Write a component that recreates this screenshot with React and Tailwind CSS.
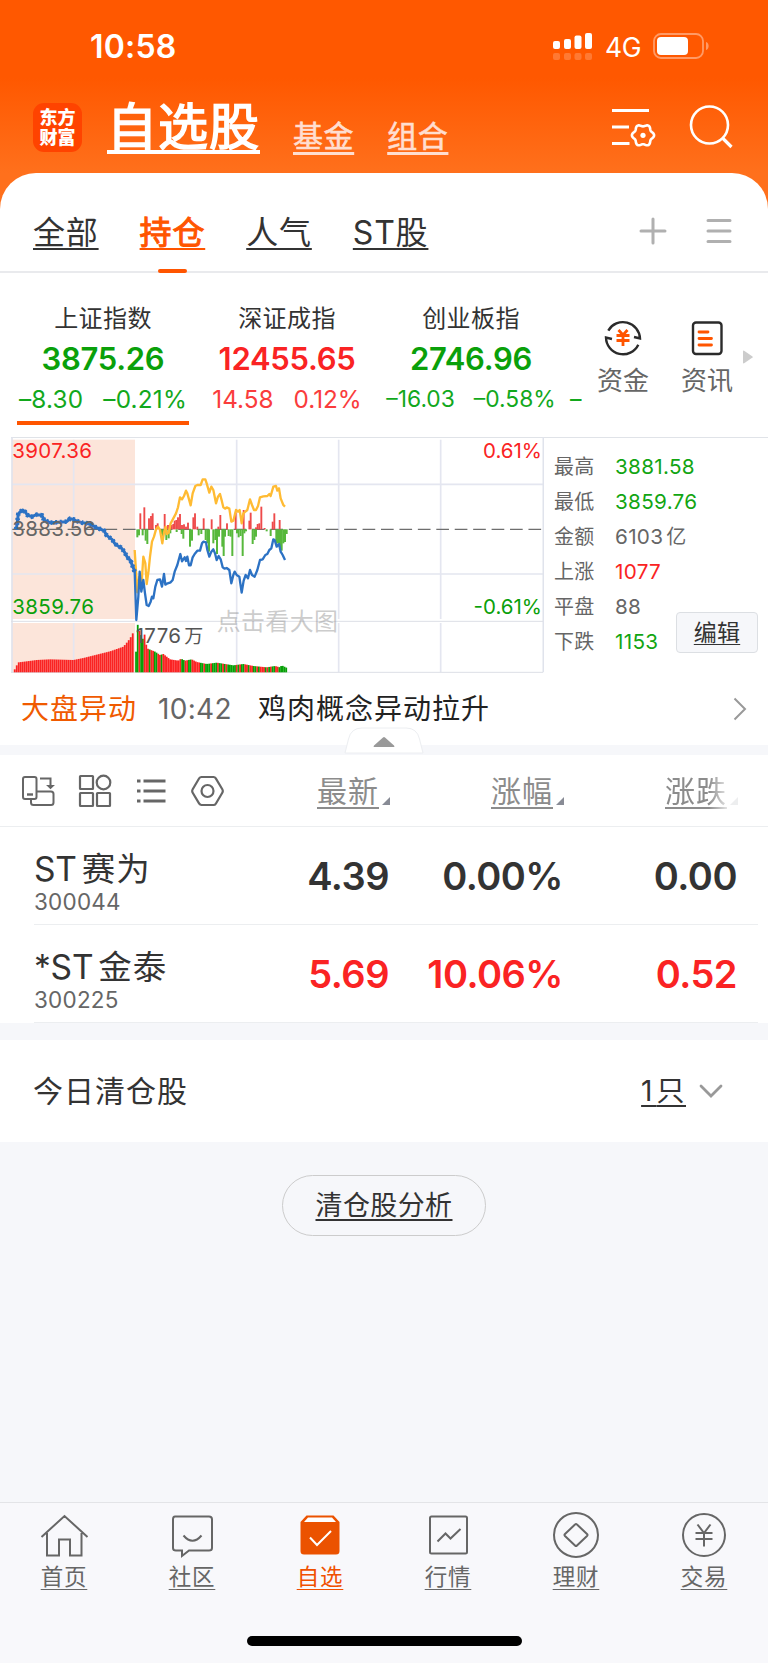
import React from 'react';
import clsx from 'clsx';

const indices = [
  { name: '上证指数', price: '3875.26', diff: '–8.30', pct: '–0.21%', up: false, active: true },
  { name: '深证成指', price: '12455.65', diff: '14.58', pct: '0.12%', up: true },
  { name: '创业板指', price: '2746.96', diff: '–16.03', pct: '–0.58%', up: false, compact: true },
];

const stats = [
  { label: '最高', value: '3881.58', color: 'text-[#12a512]' },
  { label: '最低', value: '3859.76', color: 'text-[#12a512]' },
  { label: '金额', value: '6103', unit: '亿', color: 'text-[#666]' },
  { label: '上涨', value: '1077', color: 'text-[#fa2323]' },
  { label: '平盘', value: '88', color: 'text-[#666]' },
  { label: '下跌', value: '1153', color: 'text-[#12a512]' },
];

const stocks = [
  { prefix: 'ST', name: '赛为', code: '300044', price: '4.39', pct: '0.00%', diff: '0.00', color: 'text-[#333]' },
  { prefix: '*ST', name: '金泰', code: '300225', price: '5.69', pct: '10.06%', diff: '0.52', color: 'text-[#fa2323]' },
];

// Chart data, in viewBox units
const auctionLine =
  '48,298 50,290 55,252 60,246 68,240 75,245 82,255 95,260 110,254 126,256 132,270 150,278 200,275 210,266 220,268 230,273 245,278 262,280 275,285 288,292 300,297 312,302 320,316 328,322 336,328 344,340 352,347 362,352 372,364 382,382 392,392 396,404 401,416 404,426';

const priceLine =
  '404,424 409,570 415,500 419,425 424,485 430,450 435,490 440,525 446,528 452,515 456,500 460,505 466,470 472,450 480,448 486,470 492,432 496,464 503,460 512,457 518,450 524,425 532,405 536,390 541,372 546,394 554,382 558,393 562,380 567,406 572,406 578,382 584,372 592,362 600,362 606,340 610,335 618,337 622,360 628,380 634,365 640,358 645,370 650,390 656,378 662,388 668,412 674,416 680,414 688,420 694,460 700,435 704,425 710,435 718,440 725,488 731,452 737,435 744,445 750,420 756,435 764,440 772,420 780,390 788,388 796,375 802,372 808,360 814,355 820,328 824,330 830,350 837,342 842,365 848,375 855,390';

const leadLine =
  '404,360 412,487 418,440 424,472 430,380 436,400 440,462 446,420 450,380 456,335 462,320 468,298 474,290 480,300 487,340 492,308 497,290 500,312 506,308 512,280 520,265 528,250 534,232 540,202 546,208 552,198 558,182 562,190 572,226 578,190 586,168 592,165 602,165 608,148 616,148 620,160 628,188 634,170 640,180 648,220 654,200 660,192 666,215 670,232 676,236 680,232 688,236 694,275 700,272 708,240 714,245 719,240 725,280 730,250 736,245 742,240 750,208 756,225 762,240 768,240 774,228 780,202 790,199 802,198 808,192 812,198 820,170 828,168 832,182 837,175 842,205 850,225 855,230';

const redBars = [
  [421, 250], [433, 232], [447, 265], [453, 258], [458, 250], [468, 285], [473, 280], [494, 252], [504, 285],
  [510, 290], [515, 285], [520, 282], [524, 272], [529, 270], [534, 262], [540, 252], [546, 285], [552, 283],
  [558, 290], [564, 278], [580, 262], [585, 250], [592, 290], [611, 265], [635, 268], [655, 290], [661, 255],
  [681, 280], [707, 248], [731, 240], [748, 272], [752, 248], [768, 292], [773, 282], [778, 280], [784, 230],
  [794, 294], [818, 275], [823, 250], [839, 270],
];

const greenBars = [
  [412, 322], [417, 316], [428, 316], [437, 332], [442, 342], [484, 312], [489, 325], [499, 330], [506, 325],
  [511, 310], [530, 306], [545, 312], [550, 326], [570, 350], [576, 332], [596, 316], [604, 312], [617, 330],
  [622, 340], [627, 365], [640, 340], [646, 330], [651, 372], [657, 320], [667, 350], [671, 378], [675, 320],
  [686, 318], [692, 320], [697, 378], [711, 310], [716, 322], [722, 318], [728, 378], [733, 310], [738, 304],
  [758, 342], [763, 330], [768, 320], [800, 304], [812, 318], [829, 342], [834, 340], [840, 355], [845, 362],
  [850, 340], [855, 336], [860, 312],
];

const volumeEnvelope = [
  [44, 718], [50, 706], [56, 697], [80, 694], [110, 690], [150, 688], [220, 690], [250, 684], [290, 674],
  [330, 664], [370, 650], [385, 632], [393, 620], [399, 608], [403, 606], [408, 665], [412, 580], [417, 600],
  [423, 614], [428, 628], [433, 610], [438, 642], [443, 656], [465, 665], [480, 675], [490, 672], [510, 688],
  [535, 692], [543, 686], [555, 692], [575, 688], [590, 696], [620, 702], [650, 698], [700, 706], [730, 702],
  [760, 708], [800, 712], [825, 708], [840, 712], [845, 706], [859, 713],
];

const volumeColors = 'ggrggrrrgrrggrrgrrrrrrrrrrrggrrggrrrrrggrgggrgggrggrgrgggggrgrggrrgrrggrgrrrgrgrggrrgggggg';

function volumeTop(x) {
  for (let i = 1; i < volumeEnvelope.length; i++) {
    const [x0, y0] = volumeEnvelope[i - 1];
    const [x1, y1] = volumeEnvelope[i];
    if (x <= x1) return y0 + ((y1 - y0) * (x - x0)) / (x1 - x0);
  }
  return 713;
}

const auctionVolume = Array.from({ length: 60 }, (_, i) => 44 + i * 6);
const tradeVolume = Array.from({ length: 89 }, (_, i) => 408 + i * 5.12);

// Six-lobed gear outline
const gearPoints = Array.from({ length: 72 }, (_, i) => {
  const a = (i * Math.PI) / 36;
  const r = 10 + 1.1 * Math.cos(6 * a);
  return `${(31 + r * Math.cos(a)).toFixed(2)},${(29.3 + r * Math.sin(a)).toFixed(2)}`;
}).join(' ');

const StatusBar = () => (
  <div className="flex h-[92px] items-center justify-between pr-[58px] pl-[90px] text-white">
    <span className="mt-[2px] text-[32px] leading-[40px] font-semibold tracking-[0.2px]">10:58</span>
    <div className="flex items-center">
      <svg className="h-[28px] w-[40px]" viewBox="0 0 40 28" fill="#fff">
        <rect x="0" y="9" width="7" height="8" rx="2" />
        <rect x="11" y="7" width="7" height="10" rx="2" />
        <rect x="21.500" y="3.500" width="7" height="13.500" rx="2" />
        <rect x="32" y="1" width="7" height="16" rx="2" />
        <g opacity="0.2">
          <rect x="0" y="21" width="7" height="7" rx="2" />
          <rect x="11" y="21" width="7" height="7" rx="2" />
          <rect x="21.500" y="21" width="7" height="7" rx="2" />
          <rect x="32" y="21" width="7" height="7" rx="2" />
        </g>
      </svg>
      <span className="mt-[2px] ml-[12px] w-[48px] text-[26.500px] leading-[30px] tracking-[-0.300px]">4G</span>
      <svg className="h-[26px] w-[57px]" viewBox="0 0 57 26" fill="none">
        <rect x="1" y="1" width="49" height="24" rx="7" stroke="#fff" strokeOpacity="0.4" strokeWidth="1.800" />
        <rect x="4" y="4" width="31" height="18" rx="4" fill="#fff" />
        <path d="M53 9c3.500 1 3.500 7 0 8z" fill="#fff" fillOpacity="0.4" />
      </svg>
    </div>
  </div>
);

const Header = () => (
  <div className="flex h-[81px] items-start pl-[33px] text-white">
    <div className="mt-[11px] flex h-[49px] w-[49px] flex-col items-center justify-center rounded-[11px] bg-[#ff4300] text-[18px] leading-[20px] font-black">
      <span>东方</span>
      <span>财富</span>
    </div>
    <span className="ml-[25px] text-[50px] leading-[70px] tracking-[1px] underline decoration-[4px] underline-offset-[5px] [-webkit-text-stroke:1.6px_white]">自选股</span>
    <span className="mt-[19px] ml-[33px] text-[30px] leading-[50px] tracking-[0.600px] text-[#ffded0] underline decoration-[2.500px] underline-offset-[5px] [-webkit-text-stroke:0.6px_#ffded0]">基金</span>
    <span className="mt-[19px] ml-[33px] text-[30px] leading-[50px] tracking-[0.600px] text-[#ffded0] underline decoration-[2.500px] underline-offset-[5px] [-webkit-text-stroke:0.6px_#ffded0]">组合</span>
    <svg className="mt-[14px] ml-[164px] h-[42px] w-[44px]" viewBox="0 0 44 42" fill="none" stroke="#fff" strokeWidth="3">
      <path d="M0 4.500h37M0 21h17M0 37.500h17.500" />
      <polygon points={gearPoints} strokeWidth="2.600" strokeLinejoin="round" />
      <circle cx="31" cy="29.300" r="2.600" fill="#fff" stroke="none" />
    </svg>
    <svg className="mt-[12px] ml-[33px] h-[46px] w-[46px]" viewBox="0 0 46 46" fill="none" stroke="#fff" strokeWidth="2.600">
      <circle cx="20.500" cy="21" r="18.500" />
      <path d="M34 34.500L42.500 43" strokeWidth="3.200" />
    </svg>
  </div>
);

const Tabs = () => (
  <div className="flex h-[100px] items-start border-b-2 border-[#e9eaed] pl-[33px] text-[32px] leading-[48px] tracking-[0.800px] text-[#333]">
    <span className="mt-[36px] underline decoration-2 underline-offset-[4px]">全部</span>
    <div className="mt-[36px] ml-[41px] flex flex-col items-center text-[#ff5500]">
      <span className="underline decoration-2 underline-offset-[4px] [-webkit-text-stroke:1px_#ff5500]">持仓</span>
      <div className="mt-[12px] h-[4px] w-[29px] rounded-full bg-[#ff5500]" />
    </div>
    <span className="mt-[36px] ml-[41px] underline decoration-2 underline-offset-[4px]">人气</span>
    <span className="mt-[36px] ml-[41px] underline decoration-2 underline-offset-[4px]">ST股</span>
    <svg className="mt-[44px] ml-auto h-[28px] w-[28px]" viewBox="0 0 28 28" stroke="#b0b0b0" strokeWidth="3" strokeLinecap="round">
      <path d="M14 2v24M2 14h24" />
    </svg>
    <svg className="mt-[44px] mr-[35px] ml-[38px] h-[28px] w-[28px]" viewBox="0 0 28 28" stroke="#b0b0b0" strokeWidth="3" strokeLinecap="round">
      <path d="M3 3.500h22M3 14h22M3 24.500h22" />
    </svg>
  </div>
);

const IndexStrip = () => (
  <div className="flex h-[164px] pl-[11px]">
    <div className="flex w-[571px] shrink-0 overflow-hidden">
      {indices.map((item) => (
        <div key={item.name} className="flex w-[184px] shrink-0 flex-col items-center pt-[28px]">
          <span className="text-[24px] leading-[36px] tracking-[0.400px] text-[#333]">{item.name}</span>
          <span className={clsx('text-[31px] leading-[44px] font-semibold tracking-[-0.300px]', item.up ? 'text-[#fa2323]' : 'text-[#0aa00a]')}>
            {item.price}
          </span>
          <div
            className={clsx(
              'flex leading-[36px] whitespace-nowrap',
              item.compact ? 'gap-[19px] text-[22.800px]' : 'gap-[20px] text-[24.300px]',
              item.active && 'tracking-[0.200px]',
              item.up ? 'text-[#fa3c3c]' : 'text-[#12a81c]'
            )}
          >
            <span>{item.diff}</span>
            <span>{item.pct}</span>
          </div>
          {item.active && <div className="mt-[4px] h-[4px] w-[172px] bg-[#ff5500]" />}
        </div>
      ))}
      <span className="ml-[7px] pt-[108px] text-[23px] leading-[36px] whitespace-nowrap text-[#12a81c]">–</span>
    </div>
    <div className="ml-[14px] flex w-[54px] flex-col items-center text-[26px] leading-[36px] text-[#666]">
      <svg className="mt-[46px] h-[38px] w-[38px]" viewBox="0 0 38 38" fill="none" stroke="#2b2b2b" strokeWidth="2.400">
        <path d="M4.300 11.600A17 17 0 0 1 36 19.500L30 18" />
        <path d="M34.300 25.700A17 17 0 0 1 2 18.500L8 20" />
        <path d="M14.500 11l4.500 5 4.500-5M12.500 16.500h13M12.500 21.500h13M19 16v11" stroke="#ff5500" strokeWidth="2.800" />
      </svg>
      <span className="mt-[6px] whitespace-nowrap">资金</span>
    </div>
    <div className="ml-[30px] flex w-[54px] flex-col items-center text-[26px] leading-[36px] text-[#666]">
      <svg className="mt-[46px] h-[38px] w-[38px]" viewBox="0 0 38 38" fill="none" strokeWidth="2.400">
        <rect x="5" y="3.500" width="28.500" height="31.500" rx="3" stroke="#2b2b2b" />
        <path d="M11 13h9M11 19.500h12.500M11 26h12.500" stroke="#ff5500" strokeWidth="2.800" strokeLinecap="round" />
      </svg>
      <span className="mt-[6px] whitespace-nowrap">资讯</span>
    </div>
    <svg className="mt-[77px] ml-[8px] h-[14px] w-[12px]" viewBox="0 0 12 14" fill="#ccc">
      <path d="M1 1.500Q1 0 2.500 1L10.500 6.500Q11 7 10.500 7.500L2.500 13Q1 14 1 12.500z" />
    </svg>
  </div>
);

const Chart = () => (
  <svg className="-mt-px h-[237px] w-[533px] shrink-0" viewBox="33 21 1599 711" fill="none">
    <rect x="36" y="29" width="369" height="538" fill="#fce5da" />
    <rect x="36" y="579" width="369" height="148" fill="#fce5da" />
    <g stroke="#e4e6f0" strokeWidth="5">
      <path d="M221 29V567M221 579V727M710 29V567M710 579V727M1016 29V567M1016 579V727M1322 29V567M1322 579V727" />
      <path d="M36 163H1629M36 432H1629" />
      <path d="M36 21V727M1630 21V727" stroke="#e0e3ec" />
      <path d="M33 574H1629M33 727H1629" strokeWidth="3" stroke="#dcdfe6" />
    </g>
    <path d="M37 298H1624" stroke="#6e6e6e" strokeWidth="4" strokeDasharray="38 17.300" />
    {redBars.map(([x, y]) => (
      <rect key={x} x={x - 2.8} y={y} width="5.600" height={298 - y} fill="#ee4a4a" />
    ))}
    {greenBars.map(([x, y]) => (
      <rect key={x} x={x - 3} y="298" width="6" height={y - 298} fill="#57b83c" />
    ))}
    {auctionVolume.map((x) => (
      <rect key={x} x={x - 2.5} y={volumeTop(x)} width="5.500" height={727 - volumeTop(x)} fill="#fa2323" />
    ))}
    {tradeVolume.map((x, i) => (
      <rect key={x} x={x - 2.6} y={volumeTop(x)} width="5.400" height={727 - volumeTop(x)} fill={volumeColors[i] === 'g' ? '#06a006' : '#fa2323'} />
    ))}
    <polyline points={leadLine} stroke="#ffbb33" strokeWidth="7" strokeLinejoin="round" />
    <polyline points={priceLine} stroke="#2c72c4" strokeWidth="7" strokeLinejoin="round" />
    <polyline points={auctionLine} stroke="#2c72c4" strokeWidth="9" strokeLinejoin="round" />
    <polyline points={auctionLine} stroke="#2c72c4" strokeWidth="14" strokeDasharray="6 8" />
    <g fontSize="61.500" letterSpacing="1">
      <text x="37" y="85" fill="#fa2323">3907.36</text>
      <text x="37" y="319" fill="#666">3883.56</text>
      <text x="37" y="551" fill="#0aa00a">3859.76</text>
      <text x="1626" y="85" fill="#fa2323" textAnchor="end" letterSpacing="0">0.61%</text>
      <text x="1626" y="551" fill="#0aa00a" textAnchor="end" letterSpacing="0">-0.61%</text>
      <text x="407" y="639" fill="#555">1776</text>
      <text x="553" y="639" fill="#555" fontSize="57">万</text>
    </g>
    <text x="650" y="600" fill="#999" fillOpacity="0.500" fontSize="72" letterSpacing="1">点击看大图</text>
  </svg>
);

const MarketPanel = () => (
  <div className="ml-[11px] flex h-[237px] border-t border-[#e0e3e8]">
    <Chart />
    <div className="relative ml-[10px] flex-1 pt-[12px] text-[20px] leading-[34.900px] tracking-[0.200px] text-[#666]">
      {stats.map((s) => (
        <div key={s.label} className="flex">
          <span className="w-[61px]">{s.label}</span>
          <span className={clsx('text-[20.700px] tracking-[0.300px]', s.color)}>{s.value}</span>
          {s.unit && <span className="ml-[3px]">{s.unit}</span>}
        </div>
      ))}
      <button className="absolute top-[174px] left-[122px] h-[41px] w-[82px] rounded-[4px] border border-[#dcdfe3] bg-[#f6f7fa] text-[23px] leading-[38px] text-[#333] underline decoration-1 underline-offset-[3px]">
        编辑
      </button>
    </div>
  </div>
);

const NewsRow = () => (
  <div className="relative flex h-[71px] items-center pb-px pl-[21px] text-[28px] leading-[40px] tracking-[1px]">
    <span className="w-[137px] text-[#f05a00]">大盘异动</span>
    <span className="w-[100px] tracking-[0.300px] text-[#666]">10:42</span>
    <span className="text-[#222]">鸡肉概念异动拉升</span>
    <svg className="mr-[21px] ml-auto h-[24px] w-[14px]" viewBox="0 0 14 24" fill="none" stroke="#999" strokeWidth="2">
      <path d="M1.500 1.500L12 12 1.500 22.500" />
    </svg>
    {/* Collapse handle over the divider */}
    <svg className="absolute top-[53px] left-[344px] z-10 h-[28px] w-[80px]" viewBox="0 0 80 28" fill="none">
      <path d="M1 26L4.500 12Q7 1 18 1H62Q73 1 75.500 12L79 26z" fill="#fff" stroke="#eceef1" />
      <path d="M30 20Q29 19.500 30 18.500L39 10.500Q40 9.500 41 10.500L50 18.500Q51 19.500 50 20z" fill="#999" />
    </svg>
  </div>
);

const SortHead = ({ label, faded }) => (
  <div className={clsx('flex w-[73px] items-end', faded && 'bg-white [mask-image:linear-gradient(to_right,#000_60%,rgba(0,0,0,0.15)_88%)]')}>
    <span className="whitespace-nowrap underline decoration-2 underline-offset-[5px]">{label}</span>
    <svg className="mb-[9px] ml-[3px] h-[8px] w-[8px] shrink-0" viewBox="0 0 8 8" fill="#888b95">
      <path d="M8 0v8H0z" />
    </svg>
  </div>
);

const Toolbar = () => (
  <div className="flex h-[72px] items-center border-b border-[#eceef0] pl-[21px]">
    <svg className="h-[34px] w-[34px]" viewBox="0 0 34 34" fill="none" stroke="#666" strokeWidth="2">
      <rect x="2" y="3" width="13.500" height="22" rx="2" />
      <path d="M6 20.500h6" strokeWidth="2.400" />
      <path d="M10 25v3.500q0 2.500 2.500 2.500h17.500q2.500 0 2.500-2.500V20q0-2.500-2.500-2.500H15.500" />
      <path d="M19 4.500h10.500V13" />
      <path d="M26.500 11.500h6l-3 3z" fill="#666" strokeWidth="1.200" />
    </svg>
    <svg className="ml-[23px] h-[34px] w-[34px]" viewBox="0 0 34 34" fill="none" stroke="#666" strokeWidth="2.200">
      <rect x="2" y="2" width="13" height="13" rx="0.500" />
      <circle cx="25.500" cy="8.500" r="6.800" />
      <rect x="2" y="19" width="13" height="13" rx="0.500" />
      <rect x="19" y="19" width="13" height="13" rx="0.500" />
    </svg>
    <svg className="ml-[23px] h-[34px] w-[32px]" viewBox="0 0 32 34" stroke="#666" strokeWidth="3">
      <path d="M8.500 7h22M8.500 17h22M8.500 27h22" />
      <path d="M2 7h3.500M2 17h3.500M2 27h3.500" />
    </svg>
    <svg className="ml-[24px] h-[34px] w-[34px]" viewBox="0 0 34 34" fill="none" stroke="#666" strokeWidth="2.200">
      <path d="M10.500 3h12q1.500 0 2.300 1.300l6.500 11q1 1.700 0 3.400l-6.500 11Q24 31 22.500 31h-12q-1.500 0-2.300-1.300l-6.500-11q-1-1.700 0-3.400l6.500-11Q9 3 10.500 3z" />
      <circle cx="16.500" cy="17" r="6" />
    </svg>
    <div className="ml-[92px] flex gap-[101px] text-[30px] leading-[46px] tracking-[1px] text-[#8c8c8c]">
      <SortHead label="最新" />
      <SortHead label="涨幅" />
      <SortHead label="涨跌" faded />
    </div>
  </div>
);

const StockRow = ({ stock }) => (
  <div className="mr-[10px] ml-[34px] flex h-[98px] items-center border-b border-[#eceef0]">
    <div className="flex w-[180px] flex-col pt-[9px]">
      <div className="flex items-center gap-[5px] text-[33.500px] leading-[44px] text-[#333]">
        <span className="tracking-[-0.200px]">{stock.prefix}</span>
        <span className="tracking-[1px]">{stock.name}</span>
      </div>
      <span className="-mt-px text-[22.500px] leading-[24px] tracking-[0.200px] text-[#666]">{stock.code}</span>
    </div>
    <div className={clsx('flex text-right text-[38px] leading-[48px] font-semibold tracking-[-0.500px]', stock.color)}>
      <span className="w-[175px]">{stock.price}</span>
      <span className="w-[174px]">{stock.pct}</span>
      <span className="w-[174px]">{stock.diff}</span>
    </div>
  </div>
);

const NavItem = ({ label, active, children }) => (
  <div className={clsx('flex w-[128px] flex-col items-center pt-[8px] text-[22.500px] leading-[32px] tracking-[0.800px]', active ? 'text-[#f05000]' : 'text-[#666]')}>
    <svg className="h-[50px] w-[50px]" viewBox="0 0 50 50" fill="none" stroke="#666" strokeWidth="2">
      {children}
    </svg>
    <span className="underline decoration-1 underline-offset-[4px]">{label}</span>
  </div>
);

const BottomNav = () => (
  <div className="flex h-[161px] flex-col border-t border-[#e3e4e7] bg-[#f8f8fb]">
    <div className="flex">
      <NavItem label="首页">
        <path d="M2.500 26L25.500 5 48.500 26M8 22V44.500H20V28.500H31V44.500H42.500V22" />
      </NavItem>
      <NavItem label="社区">
        <path d="M8 5.500H42Q45 5.500 45 8.500V37Q45 39.500 42 39.500H22L15 45V39.500H9Q6 39.500 6 37V8.500Q6 5.500 8 5.500z" />
        <path d="M16.500 24.500Q25.500 35 34.500 24.500" />
      </NavItem>
      <NavItem label="自选" active>
        <path d="M11.500 4.500H38.500L44.500 11V40Q44.500 43.500 41 43.500H9Q5.500 43.500 5.500 40V11z" fill="#eb5200" stroke="none" />
        <path d="M13 6.500H37L41 11H9z" fill="#fff" stroke="none" />
        <path d="M15 26.500L22 34 36 20" stroke="#fff" />
      </NavItem>
      <NavItem label="行情">
        <rect x="7" y="5.500" width="37" height="37" rx="1.500" />
        <path d="M14.500 30.500L22.500 22.500 27.500 27.500 37.500 18" />
      </NavItem>
      <NavItem label="理财">
        <circle cx="25" cy="24" r="22" />
        <path d="M24 13.500Q25 12.500 26 13.500L36 23Q37 24 36 25L26 34.500Q25 35.500 24 34.500L14 25Q13 24 14 23z" />
      </NavItem>
      <NavItem label="交易">
        <circle cx="25" cy="24" r="21" />
        <path d="M18.500 13.500L25 22 31.500 13.500M16.500 22H33.500M16.500 28H33.500M25 22V35.500" />
      </NavItem>
    </div>
    <div className="mx-auto mt-auto mb-[17px] h-[10px] w-[275px] rounded-full bg-black" />
  </div>
);

export default function App() {
  return (
    <div className="flex h-[1663px] w-[768px] flex-col overflow-hidden bg-[#f6f7fa] font-['Inter','Noto_Sans_CJK_SC',sans-serif] [text-decoration-skip-ink:none]">
      <div className="bg-[linear-gradient(#ff5800_0px,#ff5800_78px,#ff701c_173px)]">
        <StatusBar />
        <Header />
        <div className="rounded-t-[36px] bg-white">
          <Tabs />
          <IndexStrip />
        </div>
      </div>
      <div className="bg-white">
        <MarketPanel />
        <NewsRow />
      </div>
      <div className="mt-[10px] bg-white">
        <Toolbar />
        {stocks.map((stock) => (
          <StockRow key={stock.code} stock={stock} />
        ))}
      </div>
      <div className="mt-[17px] flex h-[102px] items-center justify-between bg-white pr-[45px] pl-[33px] text-[#333]">
        <span className="text-[30px] leading-[40px] tracking-[1px]">今日清仓股</span>
        <div className="flex items-center">
          <span className="text-[28px] leading-[40px] underline decoration-2 underline-offset-[4px]">
            <span className="tracking-[4px]">1</span>
            <span className="tracking-[1.500px]">只</span>
          </span>
          <svg className="ml-[13px] h-[14px] w-[24px]" viewBox="0 0 24 14" fill="none" stroke="#999" strokeWidth="2.800" strokeLinecap="round">
            <path d="M2 2L12 12 22 2" />
          </svg>
        </div>
      </div>
      <div className="flex flex-1 justify-center pt-[33px]">
        <button className="h-[61px] w-[204px] rounded-full border border-[#ccc] text-[27px] leading-[58px] tracking-[0.400px] text-[#333] underline decoration-2 underline-offset-[4px]">
          清仓股分析
        </button>
      </div>
      <BottomNav />
    </div>
  );
}
